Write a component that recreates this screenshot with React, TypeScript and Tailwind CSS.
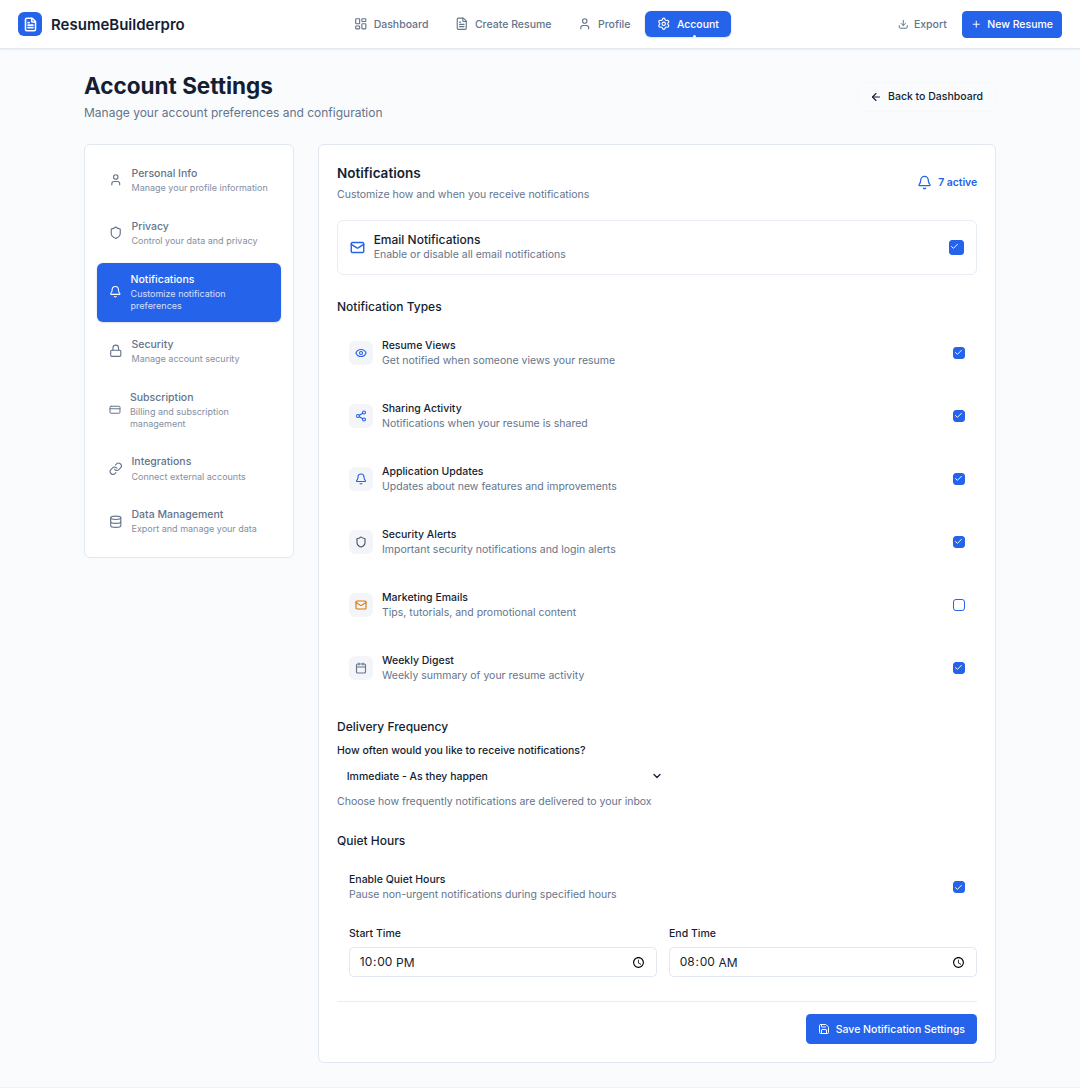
import { useState } from 'react';
import {
  ArrowLeft,
  Bell,
  Calendar,
  Check,
  ChevronDown,
  CreditCard,
  Database,
  Download,
  Eye,
  FileText,
  LayoutDashboard,
  Link,
  Lock,
  Mail,
  Plus,
  Save,
  Settings,
  Share2,
  Shield,
  User,
  type LucideIcon,
} from 'lucide-react';

interface NavItem {
  label: string;
  icon: LucideIcon;
}

interface SettingsTab {
  id: string;
  label: string;
  description: string;
  icon: LucideIcon;
}

interface NotificationType {
  id: string;
  label: string;
  description: string;
  icon: LucideIcon;
  color: string;
}

const navItems: NavItem[] = [
  { label: 'Dashboard', icon: LayoutDashboard },
  { label: 'Create Resume', icon: FileText },
  { label: 'Profile', icon: User },
  { label: 'Account', icon: Settings },
];

const tabs: SettingsTab[] = [
  { id: 'personal', label: 'Personal Info', description: 'Manage your profile information', icon: User },
  { id: 'privacy', label: 'Privacy', description: 'Control your data and privacy', icon: Shield },
  { id: 'notifications', label: 'Notifications', description: 'Customize notification preferences', icon: Bell },
  { id: 'security', label: 'Security', description: 'Manage account security', icon: Lock },
  { id: 'subscription', label: 'Subscription', description: 'Billing and subscription management', icon: CreditCard },
  { id: 'integrations', label: 'Integrations', description: 'Connect external accounts', icon: Link },
  { id: 'data', label: 'Data Management', description: 'Export and manage your data', icon: Database },
];

const notificationTypes: NotificationType[] = [
  { id: 'views', label: 'Resume Views', description: 'Get notified when someone views your resume', icon: Eye, color: 'text-[#2563eb]' },
  { id: 'sharing', label: 'Sharing Activity', description: 'Notifications when your resume is shared', icon: Share2, color: 'text-[#2563eb]' },
  { id: 'updates', label: 'Application Updates', description: 'Updates about new features and improvements', icon: Bell, color: 'text-[#2563eb]' },
  { id: 'security', label: 'Security Alerts', description: 'Important security notifications and login alerts', icon: Shield, color: 'text-[#475569]' },
  { id: 'marketing', label: 'Marketing Emails', description: 'Tips, tutorials, and promotional content', icon: Mail, color: 'text-[#d97706]' },
  { id: 'digest', label: 'Weekly Digest', description: 'Weekly summary of your resume activity', icon: Calendar, color: 'text-[#64748b]' },
];

export default function App() {
  const [activeTab, setActiveTab] = useState('notifications');

  return (
    // Compact density: the whole app renders at 75%
    <div className="flex min-h-[1451px] flex-col bg-[#fafbfd] font-[Inter,sans-serif] text-[#141e33] antialiased [zoom:0.75]">
      <Header />

      <main className="mx-auto w-full max-w-7xl px-8 pt-[30.5px] pb-[31px]">
        <div className="mb-[30px] flex items-center justify-between">
          <div>
            <h1 className="text-3xl font-bold">Account Settings</h1>
            <p className="mt-1.5 text-base text-[#64748b]">
              Manage your account preferences and configuration
            </p>
          </div>
          <button className="flex h-10 items-center gap-2 rounded-md border border-[#f6f8fb] px-4 text-sm font-medium">
            <ArrowLeft size={16} strokeWidth={2.25} />
            Back to Dashboard
          </button>
        </div>

        <div className="flex items-start gap-8">
          <Sidebar activeTab={activeTab} onSelect={setActiveTab} />
          <NotificationsPanel />
        </div>
      </main>

      <footer className="flex-1 border-t border-[#eff2f6] bg-[#fdfdfe]" />
    </div>
  );
}

function Header() {
  return (
    <header className="flex h-[65.5px] items-center justify-between border-b border-[#e2e8f0] bg-white px-6 shadow-sm">
      <div className="flex items-center gap-3">
        <div className="flex h-8 w-8 items-center justify-center rounded-lg bg-[#2563eb]">
          <FileText size={20} strokeWidth={2.5} className="text-white" />
        </div>
        <span className="text-xl font-semibold">ResumeBuilderpro</span>
      </div>

      <nav className="-ml-px flex items-center gap-1">
        {navItems.map(item => (
          <NavButton key={item.label} item={item} active={item.label === 'Account'} />
        ))}
      </nav>

      <div className="flex items-center gap-2">
        <button className="flex h-9 items-center gap-[7px] px-3 text-sm font-medium text-[#64748b]">
          <Download size={14} strokeWidth={2.25} />
          Export
        </button>
        <button className="flex h-9 items-center gap-2 rounded-md bg-[#2563eb] px-3 text-sm font-medium text-white">
          <Plus size={14} strokeWidth={2.25} />
          New Resume
        </button>
      </div>
    </header>
  );
}

function NavButton({ item, active }: { item: NavItem; active: boolean }) {
  const Icon = item.icon;

  return (
    <button
      className={`relative flex h-[34px] items-center gap-2 rounded-lg px-4 text-sm font-medium ${
        active ? 'bg-[#2563eb] text-white shadow-sm' : 'text-[#64748b]'
      }`}
    >
      <Icon size={18} />
      {item.label}
      {active && (
        <span className="absolute -bottom-px left-[63px] h-1 w-1 rounded-full bg-white" />
      )}
    </button>
  );
}

function Sidebar({
  activeTab,
  onSelect,
}: {
  activeTab: string;
  onSelect: (id: string) => void;
}) {
  return (
    <aside className="flex w-70 shrink-0 flex-col gap-2 rounded-lg border border-[#e2e8f0] bg-white p-4">
      {tabs.map(({ id, label, description, icon: Icon }) => (
        <button
          key={id}
          onClick={() => onSelect(id)}
          className={`flex items-center gap-3 rounded-lg px-4 pt-3 pb-[13px] text-left ${
            id === activeTab ? 'bg-[#2563eb] text-white shadow-sm' : 'text-[#64748b]'
          }`}
        >
          <Icon size={18} />
          <div>
            <div className="text-sm font-medium">{label}</div>
            <div className="mt-[1.5px] text-xs opacity-80">{description}</div>
          </div>
        </button>
      ))}
    </aside>
  );
}

function NotificationsPanel() {
  const [enabled, setEnabled] = useState<Record<string, boolean>>({
    email: true,
    views: true,
    sharing: true,
    updates: true,
    security: true,
    marketing: false,
    digest: true,
    quiet: true,
  });

  const toggle = (id: string) => setEnabled(prev => ({ ...prev, [id]: !prev[id] }));

  return (
    <section className="flex flex-1 flex-col gap-8 rounded-lg border border-[#e2e8f0] bg-white p-6">
      <div className="flex flex-col gap-6">
        <div className="flex items-center justify-between">
          <div>
            <h2 className="text-lg font-semibold">Notifications</h2>
            <p className="mt-1 text-sm text-[#64748b]">
              Customize how and when you receive notifications
            </p>
          </div>
          <div className="flex items-center gap-2 text-sm font-semibold tracking-[-0.01em] text-[#2563eb]">
            <Bell size={20} />
            7 active
          </div>
        </div>

        <div className="flex items-center justify-between rounded-lg border border-[#e8ecf3] px-[15.5px] py-[15px]">
          <div className="flex items-center gap-3">
            <Mail size={20} strokeWidth={2.25} className="text-[#2563eb]" />
            <div>
              <h3 className="text-base leading-5 font-medium">Email Notifications</h3>
              <p className="text-sm text-[#64748b]">Enable or disable all email notifications</p>
            </div>
          </div>
          <Checkbox large checked={enabled.email} onChange={() => toggle('email')} />
        </div>
      </div>

      {/* Notification types */}
      <div>
        <h3 className="mb-4 text-base leading-5 font-medium">Notification Types</h3>
        <div className="flex flex-col gap-3">
          {notificationTypes.map(({ id, label, description, icon: Icon, color }) => (
            <div key={id} className="flex items-center justify-between p-4">
              <div className="flex items-center gap-3">
                <div className="flex h-8 w-8 items-center justify-center rounded-lg bg-[#f3f5f9]">
                  <Icon size={16} strokeWidth={2.25} className={color} />
                </div>
                <div>
                  <h4 className="text-sm font-medium">{label}</h4>
                  <p className="text-sm text-[#64748b]">{description}</p>
                </div>
              </div>
              <Checkbox checked={enabled[id]} onChange={() => toggle(id)} />
            </div>
          ))}
        </div>
      </div>

      {/* Delivery frequency */}
      <div>
        <h3 className="mb-3 text-base leading-5 font-medium">Delivery Frequency</h3>
        <div className="text-sm font-medium">How often would you like to receive notifications?</div>
        <button className="mt-[5px] flex h-10 w-full max-w-md items-center justify-between px-[13px] text-sm font-medium">
          Immediate - As they happen
          <ChevronDown size={16} strokeWidth={2.5} />
        </button>
        <p className="mt-1 text-sm text-[#64748b]">
          Choose how frequently notifications are delivered to your inbox
        </p>
      </div>

      {/* Quiet hours */}
      <div>
        <h3 className="mb-4 text-base leading-5 font-medium">Quiet Hours</h3>
        <div className="flex items-center justify-between p-4">
          <div>
            <h4 className="text-sm font-medium">Enable Quiet Hours</h4>
            <p className="text-sm text-[#64748b]">
              Pause non-urgent notifications during specified hours
            </p>
          </div>
          <Checkbox checked={enabled.quiet} onChange={() => toggle('quiet')} />
        </div>
        <div className="mt-4 grid grid-cols-2 gap-4 pl-4">
          <TimeField label="Start Time" value="22:00" />
          <TimeField label="End Time" value="08:00" />
        </div>
      </div>

      <div className="flex justify-end border-t border-[#e8ecf3] pt-4">
        <button className="flex h-10 items-center gap-2 rounded-md bg-[#2563eb] px-4 text-sm font-medium text-white">
          <Save size={16} />
          Save Notification Settings
        </button>
      </div>
    </section>
  );
}

function Checkbox({
  checked,
  large,
  onChange,
}: {
  checked: boolean;
  large?: boolean;
  onChange: () => void;
}) {
  return (
    <button
      role="checkbox"
      aria-checked={checked}
      onClick={onChange}
      className={`relative shrink-0 rounded border border-[#2563eb] ${large ? 'h-5 w-5' : 'h-4 w-4'} ${
        checked ? 'bg-[#2563eb]' : 'bg-white'
      }`}
    >
      {checked && (
        <Check size={12} strokeWidth={2.5} className="absolute top-px left-0 text-white" />
      )}
    </button>
  );
}

function TimeField({ label, value }: { label: string; value: string }) {
  return (
    <label className="text-sm font-medium">
      {label}
      <input
        type="time"
        defaultValue={value}
        className="mt-2 block h-10 w-full rounded-md border border-[#e2e8f0] bg-white px-3 text-base font-normal"
      />
    </label>
  );
}
